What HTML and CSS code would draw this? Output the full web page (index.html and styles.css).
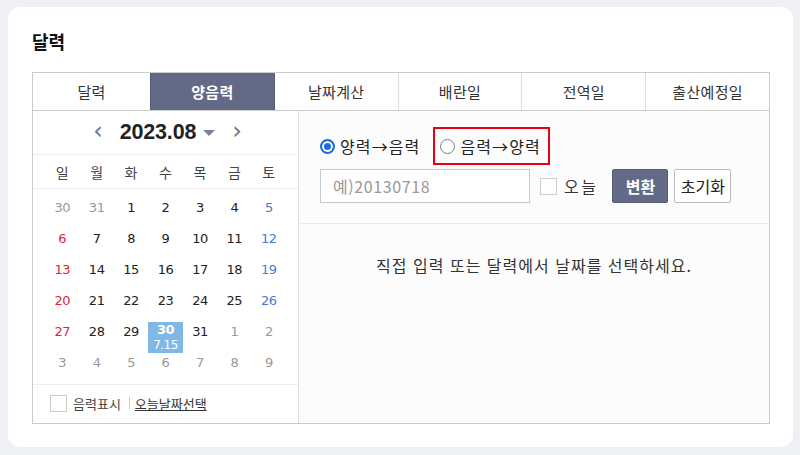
FILE: index.html
```html
<!DOCTYPE html>
<html lang="ko">
<head>
  <meta charset="UTF-8">
  <title>달력</title>
  <link rel="stylesheet" href="styles.css">
</head>
<body>
  <section class="card">
    <h2 class="title">달력</h2>

    <ul class="tabs">
      <li class="tab first">달력</li>
      <li class="tab active">양음력</li>
      <li class="tab">날짜계산</li>
      <li class="tab">배란일</li>
      <li class="tab">전역일</li>
      <li class="tab">출산예정일</li>
    </ul>

    <div class="body">
      <div class="cal">
        <div class="cal-head">
          <span class="arrow">&#8249;</span>
          <span class="month">2023.08</span>
          <span class="caret"></span>
          <span class="arrow">&#8250;</span>
        </div>
        <div class="weekdays">
          <span>일</span><span>월</span><span>화</span><span>수</span><span>목</span><span>금</span><span>토</span>
        </div>
        <div class="days">
          <span class="off">30</span><span class="off">31</span><span>1</span><span>2</span><span>3</span><span>4</span><span class="sat">5</span>
          <span class="sun">6</span><span>7</span><span>8</span><span>9</span><span>10</span><span>11</span><span class="sat">12</span>
          <span class="sun">13</span><span>14</span><span>15</span><span>16</span><span>17</span><span>18</span><span class="sat">19</span>
          <span class="sun">20</span><span>21</span><span>22</span><span>23</span><span>24</span><span>25</span><span class="sat">26</span>
          <span class="sun">27</span><span>28</span><span>29</span>
          <span class="today"><b>30</b><small>7.15</small></span>
          <span>31</span><span class="off">1</span><span class="off">2</span>
          <span class="off">3</span><span class="off">4</span><span class="off">5</span><span class="off">6</span><span class="off">7</span><span class="off">8</span><span class="off">9</span>
        </div>
        <div class="cal-foot">
          <span class="check"></span>
          <span>음력표시</span>
          <span class="bar"></span>
          <a class="link">오늘날짜선택</a>
        </div>
      </div>

      <div class="conv">
        <div class="form">
          <div class="radios">
            <label class="radio"><span class="dot on"></span>양력→음력</label>
            <label class="radio boxed"><span class="dot"></span>음력→양력</label>
          </div>
          <div class="inputs">
            <input class="date" type="text" placeholder="예)20130718">
            <label class="today-chk"><span class="check"></span>오늘</label>
            <button class="btn primary">변환</button>
            <button class="btn">초기화</button>
          </div>
        </div>
        <p class="result">직접 입력 또는 달력에서 날짜를 선택하세요.</p>
      </div>
    </div>
  </section>
</body>
</html>
```

FILE: styles.css
```css
*,
*::before,
*::after{
  box-sizing: border-box;
}
body{
  margin: 0;
  background-color: #eff0f4;
  font-family: "Noto Sans CJK KR", "Noto Sans", sans-serif;
  color: #222;
}
.card{
  margin: 7px 7px 8px 8px;
  height: 440px;
  background: #fff;
  border-radius: 12px;
  padding: 22px 23px 0 24px;
}
.title{
  margin: 0;
  font-size: 18px;
  line-height: 24px;
  font-weight: 700;
  color: #111;
}

/* tabs */
.tabs{
  list-style: none;
  margin: 19px 0 0;
  padding: 0;
  display: flex;
  border: 1px solid #ccc;
  height: 39px;
}
.tab{
  flex: 1;
  display: flex;
  align-items: center;
  justify-content: center;
  font-size: 15px;
  letter-spacing: 0.3px;
  color: #333;
  border-left: 1px solid #ddd;
}
.tab.first{
  flex: 0 0 117px;
  border-left: 0;
}
.tab.active{
  background: #636a87;
  color: #fff;
  font-weight: 700;
  border-left: 1px solid #555b77;
}
.tab.active + .tab{
  border-left: 1px solid #555b77;
}

.body{
  display: flex;
  height: 313px;
  border: 1px solid #ccc;
  border-top: 0;
}

/* calendar */
.cal{
  width: 266px;
  border-right: 1px solid #ddd;
  display: flex;
  flex-direction: column;
}
.cal-head{
  height: 44px;
  display: flex;
  align-items: center;
  justify-content: center;
  border-bottom: 1px solid #eee;
  padding-left: 4px;
}
.arrow{
  font-family: "DejaVu Sans", sans-serif;
  font-size: 24px;
  color: #6b7191;
  line-height: 20px;
  padding-bottom: 4px;
}
.month{
  font-family: "Liberation Sans", sans-serif;
  font-weight: 700;
  font-size: 21.5px;
  letter-spacing: -0.2px;
  margin: 0 7px 0 17px;
}
.caret{
  width: 0;
  height: 0;
  border-left: 6px solid transparent;
  border-right: 6px solid transparent;
  border-top: 6px solid #7b8098;
  margin-right: 17px;
}
.weekdays,
.days{
  display: grid;
  grid-template-columns: repeat(7, 1fr);
  padding: 0 12px;
  text-align: center;
}
.weekdays{
  height: 34px;
  align-items: center;
  font-size: 14px;
  color: #444;
  border-bottom: 1px solid #eee;
}
.days{
  grid-auto-rows: 31px;
  padding-top: 3px;
  height: 196px;
  border-bottom: 1px solid #eee;
  font-family: "DejaVu Sans", sans-serif;
  font-size: 13px;
  letter-spacing: -0.5px;
}
.days > span{
  padding-top: 7px;
  line-height: 17px;
}
.days .off{ color: #999; }
.days .sun{ color: #e0243b; }
.days .sat{ color: #4a7ad2; }
.days .today{
  padding-top: 0;
  margin: 6px 0 -6px;
  height: 31px;
  background: #7fb8e6;
  color: #fff;
  display: flex;
  flex-direction: column;
  align-items: center;
}
.today b{
  line-height: 16px;
  font-size: 13px;
}
.today small{
  line-height: 15px;
  font-size: 12px;
}
.cal-foot{
  flex: 1;
  display: flex;
  align-items: center;
  padding: 0 0 2px 17px;
  font-size: 13px;
  color: #444;
}
.check{
  width: 17px;
  height: 17px;
  border: 1px solid #ccc;
  background: #fff;
  display: inline-block;
  margin-right: 6px;
}
.bar{
  width: 1px;
  height: 12px;
  background: #ccc;
  margin: 0 5px 0 8px;
}
.link{
  text-decoration: underline;
  color: #333;
}

/* converter */
.conv{
  flex: 1;
  background: #fcfcfc;
  display: flex;
  flex-direction: column;
}
.form{
  padding: 16px 20px 20px 21px;
  border-bottom: 1px solid #ebebeb;
}
.radios{
  display: flex;
  align-items: center;
  height: 38px;
  gap: 13px;
}
.radio{
  display: flex;
  align-items: center;
  font-size: 16px;
  letter-spacing: 1.1px;
  color: #222;
}
.radio.boxed{
  border: 2px solid #e60012;
  height: 38px;
  padding: 0 7px 0 5px;
}
.dot{
  width: 15px;
  height: 15px;
  border-radius: 50%;
  border: 1.5px solid #7b7f8e;
  margin-right: 5px;
  display: inline-block;
  background: #fff;
}
.dot.on{
  border: 2px solid #1b6ce0;
  box-shadow: inset 0 0 0 2px #fff;
  background: #1b6ce0;
}
.inputs{
  display: flex;
  align-items: center;
  margin-top: 4px;
  height: 34px;
}
.date{
  width: 210px;
  height: 34px;
  border: 1px solid #c9c9c9;
  background: #fff;
  padding: 0 12px;
  font-family: "Noto Sans CJK KR", sans-serif;
  font-size: 16px;
  letter-spacing: 0.6px;
}
.date::placeholder{
  color: #999;
}
.today-chk{
  display: flex;
  align-items: center;
  font-size: 16px;
  letter-spacing: 2.5px;
  color: #333;
  margin: 0 14px 0 10px;
}
.today-chk .check{
  margin-right: 7px;
}
.btn{
  height: 34px;
  width: 57px;
  padding: 0;
  font-family: "Noto Sans CJK KR", sans-serif;
  font-size: 16px;
  border: 1px solid #bbb;
  border-radius: 2px;
  background: #fff;
  color: #222;
  margin-right: 6px;
}
.btn.primary{
  width: 56px;
  background: #636a87;
  border-color: #565c78;
  color: #fff;
  font-weight: 700;
}
.result{
  margin: 29px 0 0;
  text-align: center;
  font-size: 16px;
  letter-spacing: 1px;
  color: #333;
}
```
